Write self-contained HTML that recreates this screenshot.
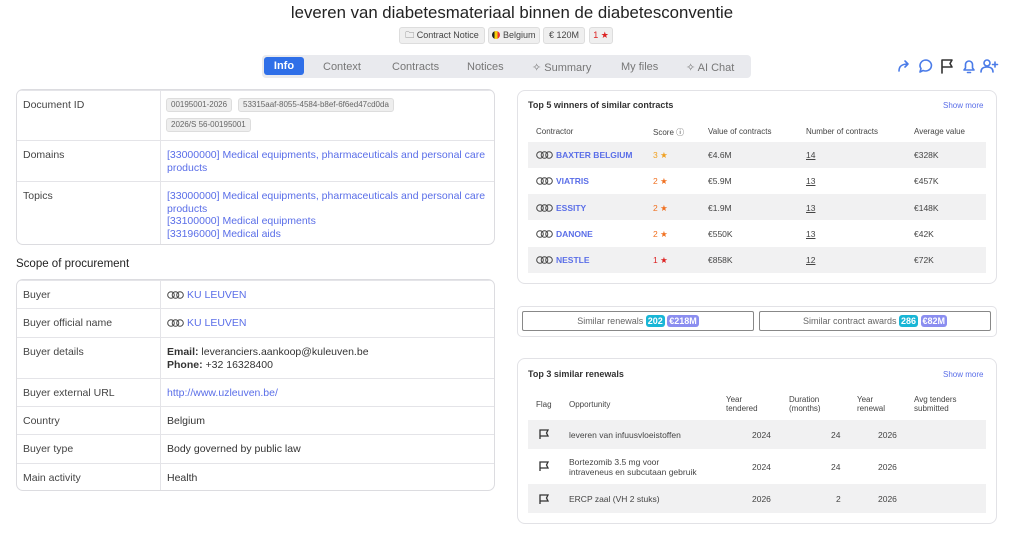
<!DOCTYPE html>
<html><head><meta charset="utf-8"><style>
*{box-sizing:border-box;margin:0;padding:0}
body{width:1024px;height:536px;background:#fff;font-family:"Liberation Sans",sans-serif;color:#333;position:relative;overflow:hidden}
.a{position:absolute}
.lnk{color:#5a6ee8}
.card{position:absolute;border:1px solid #e2e2e6;border-radius:8px}
.badge{position:absolute;top:27px;height:17px;background:#efefef;border:1px solid #ddd;border-radius:3px;font-size:9px;line-height:15px;color:#444;text-align:center;white-space:nowrap;overflow:hidden}
.tab{position:absolute;top:61px;font-size:11px;color:#777}
.lt{position:absolute;left:16px;width:479px;border:1px solid #dcdce0;border-radius:7px;overflow:hidden}
.lt .r{position:absolute;left:0;right:0;border-top:1px solid #e4e4e8;font-size:10.5px}
.lt .r:first-child{border-top:none}
.lt .k{position:absolute;left:6px;color:#444}
.lt .v{position:absolute;left:150px;right:8px;line-height:12.5px}
.lt .div{position:absolute;left:143px;top:0;bottom:0;border-left:1px solid #e4e4e8}
.pill{position:absolute;background:#eee;border:1px solid #ddd;border-radius:3px;font-size:8px;color:#666;height:14px;line-height:12px;padding:0 4px;white-space:nowrap}
.th{position:absolute;font-size:8px;color:#444}
.gr{position:absolute;left:528px;width:458px;background:#f1f1f2}
.td{position:absolute;font-size:8.5px;color:#444}
.lg{display:inline-block;width:17px;height:8px;margin-right:3px;vertical-align:-1px}
</style></head><body>
<svg width="0" height="0" style="position:absolute"><defs><symbol id="lg" viewBox="0 0 17 8"><g fill="none" stroke="#444" stroke-width="1"><circle cx="4" cy="4" r="3.3"/><circle cx="8.5" cy="4" r="3.3"/><circle cx="13" cy="4" r="3.3"/></g></symbol></defs></svg>
<div class="a" style="left:0;width:1024px;top:3px;text-align:center;font-size:16.8px;color:#222">leveren van diabetesmateriaal binnen de diabetesconventie</div>
<div class="badge" style="left:399px;width:86px">🗀 Contract Notice</div>
<div class="badge" style="left:488px;width:52px"><span style="display:inline-block;width:8px;height:8px;border-radius:50%;background:linear-gradient(90deg,#222 33%,#f5d00c 33% 66%,#e33 66%);vertical-align:-1px"></span> Belgium</div>
<div class="badge" style="left:543px;width:42px">€ 120M</div>
<div class="badge" style="left:589px;width:24px;color:#d22">1 ★</div>
<div class="a" style="left:262px;top:55px;width:489px;height:23px;background:#e9eaee;border-radius:4px"></div>
<div class="a" style="left:264px;top:57px;width:40px;height:18px;background:#2f6fe8;border-radius:3px;color:#fff;font-size:11px;font-weight:bold;text-align:center;line-height:18px">Info</div>
<div class="tab" style="left:323px">Context</div>
<div class="tab" style="left:392px">Contracts</div>
<div class="tab" style="left:467px">Notices</div>
<div class="tab" style="left:532px">✧ Summary</div>
<div class="tab" style="left:621px">My files</div>
<div class="tab" style="left:686px">✧ AI Chat</div>
<svg class="a" style="left:896px;top:57px" width="104" height="18" viewBox="0 0 104 18" fill="none" stroke-width="1.6" stroke-linecap="round" stroke-linejoin="round">
<path d="M3 14 C3 9 6 7 12 7 M9 4 L12 7 L9 10" stroke="#4a7be8"/>
<path d="M30 3 a6 5.5 0 1 1 -3 10.5 L24 15 L25 11.5 A6 5.5 0 0 1 30 3z" stroke="#4a7be8"/>
<path d="M46 16 V3 H56 L54 6.5 L56 10 H46" stroke="#333"/>
<path d="M68 13 H78 L76.5 11 V7.5 a3.5 3.5 0 0 0 -7 0 V11 Z M71.5 15.5 h3" stroke="#4a7be8"/>
<circle cx="91" cy="6" r="3" stroke="#4a7be8"/><path d="M85 15 c0-3.5 2.5-5 6-5 s6 1.5 6 5 M99 5 v5 M96.5 7.5 h5" stroke="#4a7be8"/>
</svg>

<div class="lt" style="top:89px;height:156px">
<div class="div"></div>
<div class="r" style="top:0;height:50px"><span class="k" style="top:8px">Document ID</span>
<span class="pill" style="left:149px;top:7px">00195001-2026</span><span class="pill" style="left:221px;top:7px">53315aaf-8055-4584-b8ef-6f6ed47cd0da</span><span class="pill" style="left:149px;top:27px">2026/S 56-00195001</span></div>
<div class="r" style="top:50px;height:41px"><span class="k" style="top:8px">Domains</span><div class="v lnk" style="top:8px">[33000000] Medical equipments, pharmaceuticals and personal care products</div></div>
<div class="r" style="top:91px;height:65px"><span class="k" style="top:8px">Topics</span><div class="v lnk" style="top:8px">[33000000] Medical equipments, pharmaceuticals and personal care products<br>[33100000] Medical equipments<br>[33196000] Medical aids</div></div>
</div>

<div class="a" style="left:16px;top:258px;font-size:11.5px;color:#222">Scope of procurement</div>
<div class="lt" style="top:279px;height:212px">
<div class="div"></div>
<div class="r" style="top:0;height:28px"><span class="k" style="top:8px">Buyer</span><div class="v lnk" style="top:8px"><svg class="lg"><use href="#lg"/></svg>KU LEUVEN</div></div>
<div class="r" style="top:28px;height:29px"><span class="k" style="top:8px">Buyer official name</span><div class="v lnk" style="top:8px"><svg class="lg"><use href="#lg"/></svg>KU LEUVEN</div></div>
<div class="r" style="top:57px;height:41px"><span class="k" style="top:8px">Buyer details</span><div class="v" style="top:8px;color:#333"><b>Email:</b> leveranciers.aankoop@kuleuven.be<br><b>Phone:</b> +32 16328400</div></div>
<div class="r" style="top:98px;height:28px"><span class="k" style="top:8px">Buyer external URL</span><div class="v lnk" style="top:8px">http://www.uzleuven.be/</div></div>
<div class="r" style="top:126px;height:28px"><span class="k" style="top:8px">Country</span><div class="v" style="top:8px">Belgium</div></div>
<div class="r" style="top:154px;height:29px"><span class="k" style="top:8px">Buyer type</span><div class="v" style="top:8px">Body governed by public law</div></div>
<div class="r" style="top:183px;height:29px"><span class="k" style="top:8px">Main activity</span><div class="v" style="top:8px">Health</div></div>
</div>

<div class="card" style="left:517px;top:90px;width:480px;height:194px"></div>
<div class="a" style="left:528px;top:100px;font-size:9px;font-weight:bold;color:#333">Top 5 winners of similar contracts</div>
<div class="a lnk" style="left:943px;top:101px;font-size:8px">Show more</div>
<div class="th" style="left:536px;top:127px">Contractor</div>
<div class="th" style="left:653px;top:127px">Score ⓘ</div>
<div class="th" style="left:708px;top:127px">Value of contracts</div>
<div class="th" style="left:806px;top:127px">Number of contracts</div>
<div class="th" style="left:914px;top:127px">Average value</div>
<div class="gr" style="top:142px;height:26px"></div>
<div class="gr" style="top:194px;height:26px"></div>
<div class="gr" style="top:247px;height:26px"></div>
<div class="td" style="left:536px;top:150px"><svg class="lg"><use href="#lg"/></svg><b class="lnk">BAXTER BELGIUM</b></div>
<div class="td" style="left:653px;top:150px;color:#f0a020">3 ★</div>
<div class="td" style="left:708px;top:150px">€4.6M</div>
<div class="td lnk" style="left:806px;top:150px;text-decoration:underline">14</div>
<div class="td" style="left:914px;top:150px">€328K</div>
<div class="td" style="left:536px;top:176px"><svg class="lg"><use href="#lg"/></svg><b class="lnk">VIATRIS</b></div>
<div class="td" style="left:653px;top:176px;color:#f07020">2 ★</div>
<div class="td" style="left:708px;top:176px">€5.9M</div>
<div class="td lnk" style="left:806px;top:176px;text-decoration:underline">13</div>
<div class="td" style="left:914px;top:176px">€457K</div>
<div class="td" style="left:536px;top:203px"><svg class="lg"><use href="#lg"/></svg><b class="lnk">ESSITY</b></div>
<div class="td" style="left:653px;top:203px;color:#f07020">2 ★</div>
<div class="td" style="left:708px;top:203px">€1.9M</div>
<div class="td lnk" style="left:806px;top:203px;text-decoration:underline">13</div>
<div class="td" style="left:914px;top:203px">€148K</div>
<div class="td" style="left:536px;top:229px"><svg class="lg"><use href="#lg"/></svg><b class="lnk">DANONE</b></div>
<div class="td" style="left:653px;top:229px;color:#f07020">2 ★</div>
<div class="td" style="left:708px;top:229px">€550K</div>
<div class="td lnk" style="left:806px;top:229px;text-decoration:underline">13</div>
<div class="td" style="left:914px;top:229px">€42K</div>
<div class="td" style="left:536px;top:255px"><svg class="lg"><use href="#lg"/></svg><b class="lnk">NESTLE</b></div>
<div class="td" style="left:653px;top:255px;color:#d22">1 ★</div>
<div class="td" style="left:708px;top:255px">€858K</div>
<div class="td lnk" style="left:806px;top:255px;text-decoration:underline">12</div>
<div class="td" style="left:914px;top:255px">€72K</div>

<div class="card" style="left:517px;top:306px;width:480px;height:31px;border-radius:5px"></div>
<div class="a" style="left:522px;top:311px;width:232px;height:20px;border:1px solid #888;border-radius:2px;text-align:center;font-size:9px;line-height:18px;color:#666">Similar renewals <span style="background:#19b6d6;color:#fff;font-weight:bold;border-radius:3px;padding:1px 2px">202</span> <span style="background:#8b8ef0;color:#fff;font-weight:bold;border-radius:3px;padding:1px 2px">€218M</span></div>
<div class="a" style="left:759px;top:311px;width:232px;height:20px;border:1px solid #888;border-radius:2px;text-align:center;font-size:9px;line-height:18px;color:#666">Similar contract awards <span style="background:#19b6d6;color:#fff;font-weight:bold;border-radius:3px;padding:1px 2px">286</span> <span style="background:#8b8ef0;color:#fff;font-weight:bold;border-radius:3px;padding:1px 2px">€82M</span></div>

<div class="card" style="left:517px;top:358px;width:480px;height:166px"></div>
<div class="a" style="left:528px;top:369px;font-size:9px;font-weight:bold;color:#333">Top 3 similar renewals</div>
<div class="a lnk" style="left:943px;top:370px;font-size:8px">Show more</div>
<div class="th" style="left:536px;top:400px">Flag</div>
<div class="th" style="left:569px;top:400px">Opportunity</div>
<div class="th" style="left:726px;top:395px;line-height:9px">Year<br>tendered</div>
<div class="th" style="left:789px;top:395px;line-height:9px">Duration<br>(months)</div>
<div class="th" style="left:857px;top:395px;line-height:9px">Year<br>renewal</div>
<div class="th" style="left:914px;top:395px;line-height:9px">Avg tenders<br>submitted</div>
<div class="gr" style="top:420px;height:29px"></div>
<div class="gr" style="top:484px;height:29px"></div>
<svg class="a" style="left:538px;top:428px" width="12" height="12"><path d="M2 11V2H10L8.5 5L10 8H2" fill="none" stroke="#333" stroke-width="1.3"/></svg>
<svg class="a" style="left:538px;top:460px" width="12" height="12"><path d="M2 11V2H10L8.5 5L10 8H2" fill="none" stroke="#333" stroke-width="1.3"/></svg>
<svg class="a" style="left:538px;top:493px" width="12" height="12"><path d="M2 11V2H10L8.5 5L10 8H2" fill="none" stroke="#333" stroke-width="1.3"/></svg>
<div class="td lnk" style="left:569px;top:430px">leveren van infuusvloeistoffen</div>
<div class="td lnk" style="left:569px;top:457px;line-height:10px">Bortezomib 3.5 mg voor<br>intraveneus en subcutaan gebruik</div>
<div class="td lnk" style="left:569px;top:494px">ERCP zaal (VH 2 stuks)</div>
<div class="td" style="left:752px;top:430px">2024</div><div class="td" style="left:831px;top:430px">24</div><div class="td" style="left:878px;top:430px">2026</div>
<div class="td" style="left:752px;top:462px">2024</div><div class="td" style="left:831px;top:462px">24</div><div class="td" style="left:878px;top:462px">2026</div>
<div class="td" style="left:752px;top:494px">2026</div><div class="td" style="left:836px;top:494px">2</div><div class="td" style="left:878px;top:494px">2026</div>
</body></html>
